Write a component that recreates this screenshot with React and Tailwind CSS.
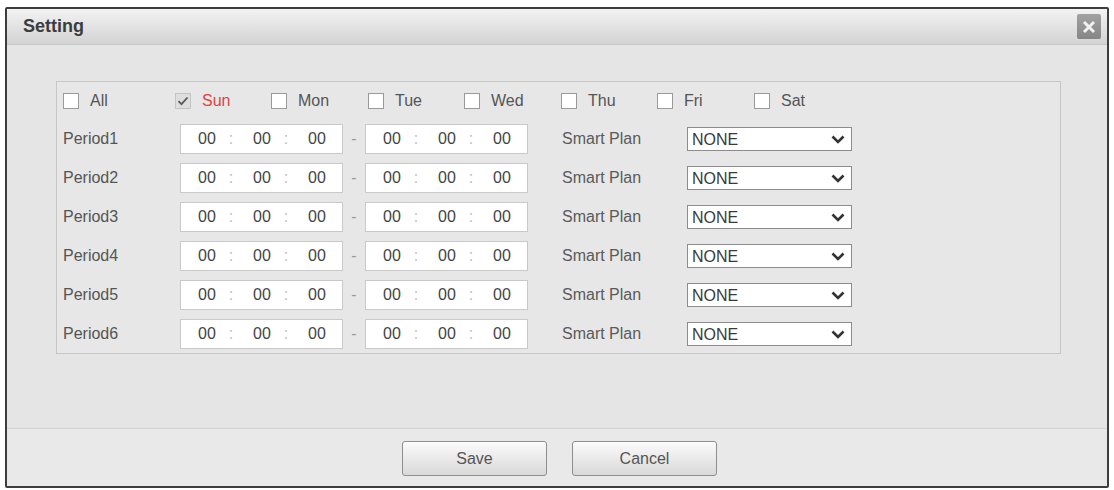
import React from 'react';

const DAYS = [
  { label: 'All', w: 'w-[112px]' },
  { label: 'Sun', w: 'w-[96px]', checked: true },
  { label: 'Mon', w: 'w-[97px]' },
  { label: 'Tue', w: 'w-[96px]' },
  { label: 'Wed', w: 'w-[97px]' },
  { label: 'Thu', w: 'w-[96px]' },
  { label: 'Fri', w: 'w-[97px]' },
  { label: 'Sat', w: 'w-[96px]' },
];

const PERIODS = ['Period1', 'Period2', 'Period3', 'Period4', 'Period5', 'Period6'];

function Check({ checked }) {
  if (checked) {
    return (
      <span className="w-[16px] h-[16px] border border-[#c4c4c4] bg-[#dedede] flex items-center justify-center">
        <svg width="12" height="10" viewBox="0 0 12 10">
          <path d="M1.5 5.2 L4.5 8.2 L10.5 1.5" fill="none" stroke="#5a5a5a" strokeWidth="1.8" />
        </svg>
      </span>
    );
  }
  return <span className="w-[16px] h-[16px] border border-[#9a9a9a] bg-white" />;
}

function TimeBox() {
  return (
    <div className="w-[163px] h-[30px] bg-white border border-[#c9c9c9] flex items-center pl-[16px] text-[16px] text-[#444]">
      <span className="w-[20px] text-center">00</span>
      <span className="w-[8px] ml-[10px] mr-[17px] text-center text-[#bdbdbd]">:</span>
      <span className="w-[20px] text-center">00</span>
      <span className="w-[8px] ml-[10px] mr-[17px] text-center text-[#bdbdbd]">:</span>
      <span className="w-[20px] text-center">00</span>
    </div>
  );
}

function PlanSelect() {
  return (
    <div className="w-[165px] h-[24px] bg-white border border-[#8c8c8c] flex items-center justify-between pl-[4px] pr-[6px]">
      <span className="text-[16px] text-[#3a3a3a] leading-[22px] pt-[2px]">NONE</span>
      <svg width="14" height="9" viewBox="0 0 14 9" className="mt-[1px]">
        <path d="M1.5 1.5 L7 7 L12.5 1.5" fill="none" stroke="#333" strokeWidth="2.6" />
      </svg>
    </div>
  );
}

function DialogButton({ children }) {
  return (
    <button className="w-[145px] h-[35px] rounded-[3px] border border-[#8e8e8e] bg-gradient-to-b from-[#fbfbfb] to-[#d9d9d9] text-[16px] text-[#555] shadow-[inset_0_1px_0_#fff]">
      {children}
    </button>
  );
}

export default function App() {
  return (
    <div className="w-[1114px] h-[490px] bg-white pt-[7px] pl-[5px] font-['Liberation_Sans',Arial,sans-serif]">
      <div className="w-[1104px] h-[481px] border-2 border-[#3d3d3d] rounded-[2px] flex flex-col bg-[#e5e5e5]">
        {/* title bar */}
        <div className="h-[36px] flex items-center justify-between pl-[16px] pr-[6px] bg-gradient-to-b from-[#f3f3f3] to-[#d3d3d3] border-b border-[#c6c6c6]">
          <span className="text-[18px] font-bold text-[#3c3c3c]">Setting</span>
          <button className="w-[24px] h-[25px] bg-gradient-to-b from-[#a2a2a2] to-[#868686] rounded-[2px] flex items-center justify-center">
            <svg width="16" height="16" viewBox="0 0 16 16">
              <path d="M3 3 L13 13 M13 3 L3 13" stroke="#f0f0f0" strokeWidth="3" />
            </svg>
          </button>
        </div>

        {/* body */}
        <div className="flex-1 pl-[49px] pt-[36px]">
          <div className="w-[1005px] h-[273px] border border-[#c6c6c6] bg-[#e7e7e7] pl-[6px] pt-[7px]">
            <div className="h-[24px] flex items-center text-[16px] text-[#555]">
              {DAYS.map((d) => (
                <div key={d.label} className={`${d.w} flex items-center gap-[11px]`}>
                  <Check checked={d.checked} />
                  <span className={d.checked ? 'text-[#e2423e]' : ''}>{d.label}</span>
                </div>
              ))}
            </div>
            <div className="mt-[11px] flex flex-col gap-[9px]">
              {PERIODS.map((p) => (
                <div key={p} className="h-[30px] flex items-center text-[16px] text-[#555]">
                  <span className="w-[117px]">{p}</span>
                  <TimeBox />
                  <span className="w-[22px] text-center text-[#999]">-</span>
                  <TimeBox />
                  <span className="ml-[34px] w-[125px] text-[#5a5a5a]">Smart Plan</span>
                  <PlanSelect />
                </div>
              ))}
            </div>
          </div>
        </div>

        {/* footer */}
        <div className="h-[58px] border-t border-[#d2d2d2] bg-[#e9e9e9] flex justify-center gap-[25px] pt-[12px] pl-[5px]">
          <DialogButton>Save</DialogButton>
          <DialogButton>Cancel</DialogButton>
        </div>
      </div>
    </div>
  );
}
